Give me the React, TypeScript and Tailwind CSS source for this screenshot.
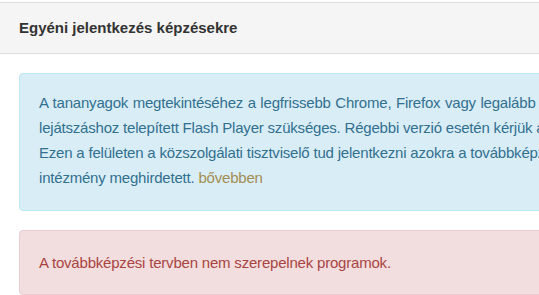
import React from "react";

export default function App() {
  return (
    <div className="w-[539px] h-[295px] overflow-hidden bg-white font-['Liberation_Sans',Arial,sans-serif]">
      <div className="w-[820px] mt-[2px]">
        <div className="h-[52px] border-y border-[#dddddd] bg-[#f5f5f5] pl-[19px] flex items-center text-[15px] font-bold text-[#333333]">
          Egyéni jelentkezés képzésekre
        </div>
        <div className="pl-[19px] pt-[19px]">
          <div className="rounded-[4px] border border-[#bce8f1] bg-[#d9edf7] text-[#31708f] text-[15px] leading-[25px] tracking-[-0.2px] pl-[19px] pt-[16px] pb-[20px] whitespace-nowrap">
            <div className="[word-spacing:0.6px]">A tananyagok megtekintéséhez a legfrissebb Chrome, Firefox vagy legalább az Internet Explorer 9 böngésző, valamint a videók</div>
            <div>lejátszáshoz telepített Flash Player szükséges. Régebbi verzió esetén kérjük a böngésző frissítését.</div>
            <div>Ezen a felületen a közszolgálati tisztviselő tud jelentkezni azokra a továbbképzésekre, amelyeket a foglalkoztató</div>
            <div>
              intézmény meghirdetett. <span className="text-[#a38d52]">bővebben</span>
            </div>
          </div>
          <div className="mt-[19px] rounded-[4px] border border-[#ebccd1] bg-[#f2dede] text-[#a94442] text-[15px] leading-[25px] tracking-[-0.2px] pl-[19px] py-[19px] whitespace-nowrap">
            A továbbképzési tervben nem szerepelnek programok.
          </div>
        </div>
      </div>
    </div>
  );
}
